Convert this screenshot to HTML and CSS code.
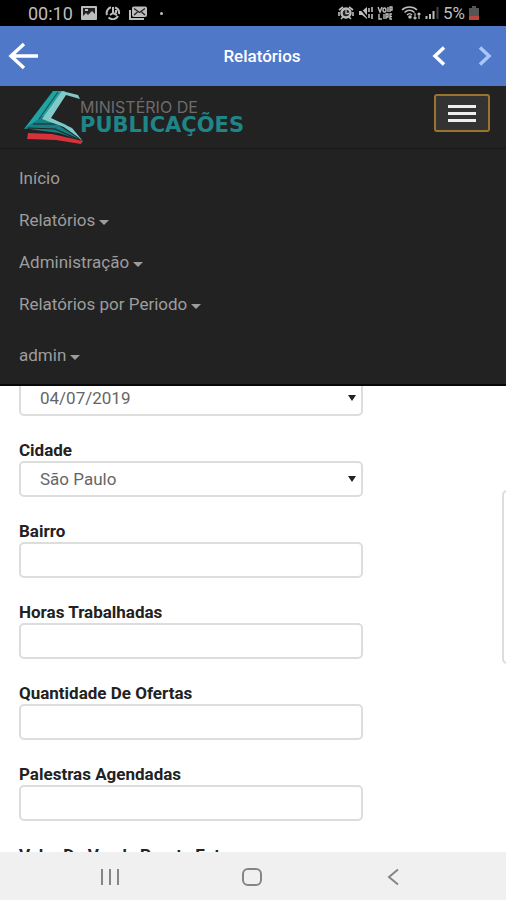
FILE: index.html
```html
<!DOCTYPE html>
<html lang="pt-BR">
<head>
<meta charset="utf-8">
<meta name="viewport" content="width=device-width, initial-scale=1">
<title>Relatórios</title>
<link rel="stylesheet" href="styles.css">
</head>
<body>
<div class="status">
  <div class="status-group">
    <span class="clock">00:10</span>
    <svg width="16" height="14" viewBox="0 0 16 14"><rect width="16" height="14" rx="1" fill="#bdbdbd"/><path d="M2 2h12v6l-3-3-4 4-2-2-3 3z" fill="#222"/><rect x="4" y="3" width="3" height="2" fill="#bdbdbd"/></svg>
    <svg width="16" height="14" viewBox="0 0 16 14" fill="none" stroke="#bdbdbd" stroke-width="2"><path d="M6 1.3A6 6 0 0 0 2 9M3.500 11.500A6 6 0 0 0 13 10M14 8A6 6 0 0 0 10 1.500M8 1v6l-3 2M8 7l4 2M11 4v3"/></svg>
    <svg width="19" height="14" viewBox="0 0 19 14"><path d="M1 4v9h14" fill="none" stroke="#bdbdbd" stroke-width="2"/><rect x="3.500" y="1" width="14" height="9.500" rx="1" fill="#bdbdbd" stroke="#bdbdbd"/><path d="M5 2.500l5.500 4 5.500-4M5 9l3.500-3M16 9l-3.500-3" fill="none" stroke="#222" stroke-width="1.300"/></svg>
    <span class="dot"></span>
  </div>
  <div class="status-group status-right">
    <svg width="16" height="14" viewBox="0 0 16 14"><path d="M1 4l4-3M15 4l-4-3M3 13l2-2M13 13l-2-2M1 6v4M15 6v4" stroke="#bdbdbd" stroke-width="1.600"/><circle cx="8" cy="7" r="4.500" fill="#222" stroke="#bdbdbd" stroke-width="2.400"/><path d="M8 4v3.500h3" fill="none" stroke="#bdbdbd" stroke-width="1.300"/></svg>
    <svg width="15" height="14" viewBox="0 0 15 14"><path d="M1 5h3l5-4v12L4 9H1z" fill="#bdbdbd"/><path d="M1 1l10 12" stroke="#000" stroke-width="1.500"/><path d="M11 2v4M11 8v4M14 1v5M14 8v5" stroke="#bdbdbd" stroke-width="1.600"/></svg>
    <svg width="16" height="14" viewBox="0 0 16 14" fill="none" stroke="#bdbdbd" stroke-width="1.400"><path d="M1 1l2 5 2-5M6 4a1.500 2 0 1 0 3 0a1.500 2 0 1 0-3 0M11 1v5M13 6V1h2v3h-2M2 8v5h3M7 8v5M9 13V8h2v3H9M15 8h-2v5h2M13 10.500h2"/></svg>
    <svg class="wifi" width="20" height="14" viewBox="0 0 20 14" fill="none" stroke="#bdbdbd" stroke-width="1.600"><path d="M1 4c4-4 11-4 15 0M3.500 6.500c3-3 7-3 10 0M6 9c2-2 3-2 5 0"/><circle cx="9" cy="11" r="1" fill="#bdbdbd"/><path d="M14 7v6M12.500 11.500l1.500 1.500 1.500-1.500M18 13V7M16.500 8.500L18 7l1.500 1.500" stroke-width="1.200"/></svg>
    <svg width="14" height="14" viewBox="0 0 14 14"><path d="M1.500 10v3M5 8v5M8.500 5v8" stroke="#bdbdbd" stroke-width="2"/><path d="M12.500 1v12" stroke="#444" stroke-width="2"/></svg>
    <span class="battery">5%</span>
    <svg width="10" height="14" viewBox="0 0 10 14"><path d="M3 0h4v2h3v12H0V2h3z" fill="#555"/><path d="M0 10h10v4H0z" fill="#b9483c"/></svg>
  </div>
</div>

<header class="appbar">
  <button class="icon-button" type="button" aria-label="Voltar"><svg width="32" height="28" viewBox="0 0 32 28"><path d="M30 14H3M16 2L3 14l13 12" fill="none" stroke="#fff" stroke-width="3.500"/></svg></button>
  <h1 class="appbar-title">Relatórios</h1>
  <div class="appbar-pager">
    <button class="icon-button" type="button" aria-label="Anterior"><svg width="14" height="20" viewBox="0 0 14 20"><path d="M12 1.500L3 10l9 8.500" fill="none" stroke="#fff" stroke-width="3.500"/></svg></button>
    <button class="icon-button" type="button" aria-label="Próximo"><svg width="14" height="20" viewBox="0 0 14 20"><path d="M2 1.500l9 8.500-9 8.500" fill="none" stroke="#a9c6fb" stroke-width="3.500"/></svg></button>
  </div>
</header>

<nav class="navbar">
  <div class="navbar-header">
    <a class="brand" href="#">
      <svg width="60" height="54" viewBox="0 0 60 54">
        <path d="M4 43l24 1 31 7-2 3-25-4-29-1z" fill="#d5323b"/>
        <path d="M29 1h12L22 29l-3 6-19 4z" fill="#1fa3a3"/>
        <path d="M1 38l18-12 22 8 18 17-24-8-23-3z" fill="#177f83"/>
        <path d="M4 38l27 1 25 11M9 34h25l21 14" fill="none" stroke="#222" stroke-width="1.200"/>
        <path d="M18 29L38 1l16 4 2 4-14-4-15 23 21 10 10 12-18-13z" fill="#82c9c7"/>
        <path d="M15 29L34 2" fill="none" stroke="#1c5557" stroke-width="1.200"/>
      </svg>
      <span class="brand-name"><span class="brand-top">MINISTÉRIO DE</span><span class="brand-main">PUBLICAÇÕES</span></span>
    </a>
    <button class="toggle" type="button" aria-label="Menu"><span class="bar"></span><span class="bar"></span><span class="bar"></span></button>
  </div>
  <div class="menu">
    <ul class="menu-list">
      <li><a class="menu-link" href="#">Início</a></li>
      <li><a class="menu-link caret" href="#">Relatórios</a></li>
      <li><a class="menu-link caret" href="#">Administração</a></li>
      <li><a class="menu-link caret" href="#">Relatórios por Periodo</a></li>
    </ul>
    <ul class="menu-list">
      <li><a class="menu-link caret" href="#">admin</a></li>
    </ul>
  </div>
</nav>

<main class="content">
  <form class="form">
    <div class="field"><div class="select-wrap"><select class="control" aria-label="Data"><option>04/07/2019</option></select></div></div>
    <div class="field"><label for="cidade">Cidade</label><div class="select-wrap"><select class="control" id="cidade"><option>São Paulo</option></select></div></div>
    <div class="field"><label for="bairro">Bairro</label><input class="control" id="bairro" type="text"></div>
    <div class="field"><label for="horas">Horas Trabalhadas</label><input class="control" id="horas" type="text"></div>
    <div class="field"><label for="ofertas">Quantidade De Ofertas</label><input class="control" id="ofertas" type="text"></div>
    <div class="field"><label for="palestras">Palestras Agendadas</label><input class="control" id="palestras" type="text"></div>
    <div class="field"><label for="valor">Valor Da Venda Pronta Entrega</label><input class="control" id="valor" type="text"></div>
  </form>
  <aside class="side-panel"></aside>
</main>

<footer class="system-nav">
  <button class="icon-button" type="button" aria-label="Recentes"><svg width="20" height="18" viewBox="0 0 20 18"><path d="M2 1v16M10 1v16M18 1v16" stroke="#858585" stroke-width="2"/></svg></button>
  <button class="icon-button" type="button" aria-label="Início"><svg width="20" height="18" viewBox="0 0 20 18"><rect x="1" y="1" width="18" height="16" rx="5" fill="none" stroke="#858585" stroke-width="2"/></svg></button>
  <button class="icon-button" type="button" aria-label="Voltar ao anterior"><svg width="20" height="18" viewBox="0 0 20 18"><path d="M15 1.500L6 9l9 7.500" fill="none" stroke="#858585" stroke-width="2"/></svg></button>
</footer>
</body>
</html>
```

FILE: styles.css
```css
* { box-sizing: border-box; }

body {
  margin: 0;
  height: 100vh;
  display: flex;
  flex-direction: column;
  overflow: hidden;
  background: #fff;
  font-family: Roboto, "Liberation Sans", sans-serif;
  font-size: 17px;
}

svg { display: block; flex: none; }

.icon-button {
  display: flex;
  padding: 0;
  border: 0;
  background: none;
}

/* Phone status bar */
.status {
  flex: none;
  height: 26px;
  padding: 0 27px 0 28px;
  display: flex;
  justify-content: space-between;
  align-items: center;
  background: #000;
  color: #bdbdbd;
}
.status-group { display: flex; align-items: center; gap: 8px; }
.status-right { gap: 4px; }
.clock { font-size: 18px; }
.wifi { margin-left: 4px; }
.dot { width: 3px; height: 3px; margin-left: 4px; border-radius: 50%; background: #bdbdbd; }

/* Application bar */
.appbar {
  flex: none;
  height: 60px;
  padding: 0 14px 0 8px;
  display: grid;
  grid-template-columns: 1fr auto 1fr;
  align-items: center;
  background: #5078c8;
}
.appbar-title { margin: 0 0 0 24px; color: #fff; font-size: 17px; font-weight: 500; }
.appbar-pager { display: flex; justify-content: flex-end; gap: 32px; }

/* Site navigation */
.navbar {
  flex: none;
  position: relative;
  z-index: 1;
  background: #222;
  border-bottom: 2px solid #080808;
}
.navbar-header {
  height: 63px;
  padding: 4px 16px 0 24px;
  display: flex;
  justify-content: space-between;
  align-items: flex-start;
  border-bottom: 1px solid #181818;
}
.brand { display: flex; align-items: center; text-decoration: none; }
.brand-name { display: flex; flex-direction: column; margin-left: -4px; }
.brand-top { font-family: Inter, sans-serif; font-size: 16px; line-height: 16px; color: #6c6c6c; }
.brand-main { font-family: "DejaVu Sans", sans-serif; font-size: 21px; font-weight: 700; line-height: 20px; color: #1f8587; }
.toggle {
  width: 56px;
  height: 38px;
  margin-top: 4px;
  padding: 0 12px;
  display: flex;
  flex-direction: column;
  justify-content: center;
  gap: 4px;
  border: 2px solid #9a742c;
  border-radius: 3px;
  background: #333;
}
.bar { height: 3px; background: #eee; }
.menu { padding: 8px 19px; }
.menu-list { margin: 0; padding: 0; list-style: none; }
.menu-list + .menu-list { margin-top: 9px; }
.menu-link {
  display: flex;
  align-items: center;
  gap: 4px;
  line-height: 42px;
  color: #9d9d9d;
  text-decoration: none;
}
.caret::after {
  content: "";
  margin-top: 4px;
  border: 5px solid transparent;
  border-top-color: #9d9d9d;
  border-bottom: 0;
}

/* Report form, scrolled beneath the open menu */
.content {
  flex: 1;
  min-height: 0;
  display: flex;
  justify-content: space-between;
  align-items: flex-start;
  overflow: hidden;
  padding-left: 19px;
}
.form {
  flex: 0 1 344px;
  margin-top: -6px;
  display: flex;
  flex-direction: column;
  gap: 23px;
}
.field label {
  display: block;
  line-height: 22px;
  color: #222;
  font-weight: 700;
}
.select-wrap { position: relative; }
.select-wrap::after {
  content: "";
  position: absolute;
  right: 7px;
  top: 15px;
  border: 4px solid transparent;
  border-top: 6px solid #222;
  border-bottom: 0;
  pointer-events: none;
}
.control {
  display: block;
  width: 100%;
  height: 36px;
  padding: 0 19px;
  border: 2px solid #ddd;
  border-radius: 5px;
  background: #fff;
  color: #666;
  font: inherit;
  appearance: none;
}
.side-panel {
  width: 20px;
  height: 174px;
  margin: 104px -16px 0 0;
  border: 2px solid #ddd;
  border-radius: 5px;
}

/* Phone navigation bar */
.system-nav {
  flex: none;
  height: 48px;
  padding: 2px 103px 0 100px;
  display: flex;
  justify-content: space-between;
  align-items: center;
  background: #f0f0f0;
}
```
